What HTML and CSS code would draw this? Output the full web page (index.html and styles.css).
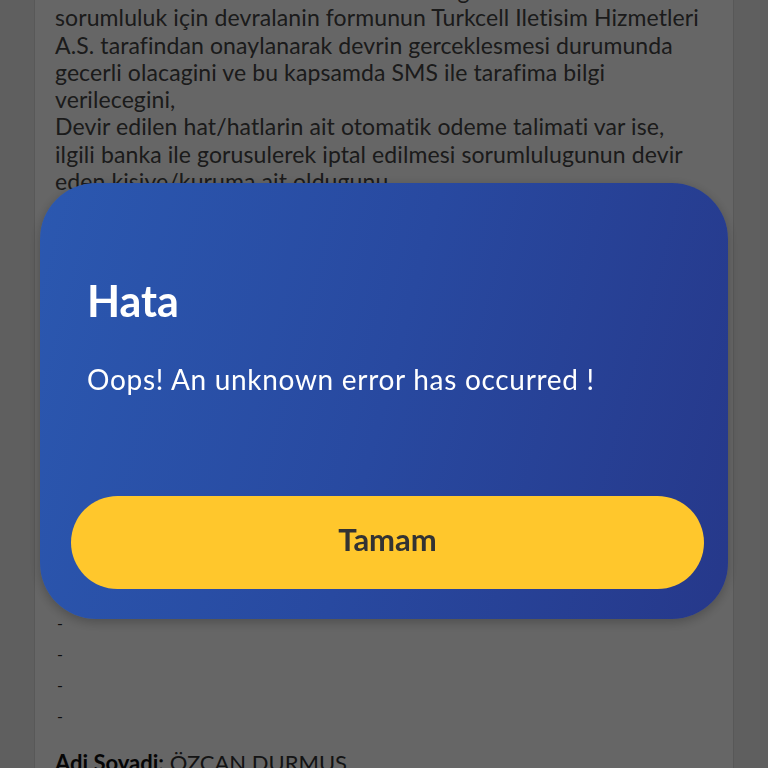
FILE: index.html
```html
<!DOCTYPE html>
<html lang="tr">
<head>
<meta charset="utf-8">
<title>Hata</title>
<link rel="stylesheet" href="styles.css">
</head>
<body>
<main class="card">
  <div class="content">
    <p class="para">
      Devreden ve devralan taraflarin tum belge ile birlikte tarafimca<br>
      sorumluluk için devralanin formunun Turkcell Iletisim Hizmetleri<br>
      A.S. tarafindan onaylanarak devrin gerceklesmesi durumunda<br>
      gecerli olacagini ve bu kapsamda SMS ile tarafima bilgi<br>
      verilecegini,<br>
      Devir edilen hat/hatlarin ait otomatik odeme talimati var ise,<br>
      ilgili banka ile gorusulerek iptal edilmesi sorumlulugunun devir<br>
      eden kisiye/kuruma ait oldugunu<br>
      kabul, beyan ve taahhut ederim.<br>
      Devir tarihine kadar olusan tum borclarin<br>
      odenmesinden devreden, devir tarihinden sonra<br>
      olusacak borclardan ise devralan sorumludur.<br>
      Devir islemi tamamlandiktan sonra hat uzerindeki<br>
      kampanya ve ek paketler devralan adina<br>
      tanimlanacaktir. Devralan, hattin kullanimindan<br>
      dogacak her turlu hukuki sorumlulugu kabul eder.<br>
      Bu form iki nusha olarak duzenlenmis olup<br>
      taraflarca okunarak imza altina alinmistir.<br>
      Devreden Bilgileri<br>
      Hat Numarasi<br>
      Abone Numarasi<br>
      Kimlik Numarasi
    </p>
    <ul class="dashes">
      <li>-</li>
      <li>-</li>
      <li>-</li>
      <li>-</li>
    </ul>
    <p class="field"><strong>Adi Soyadi:</strong> ÖZCAN DURMUS</p>
  </div>
</main>

<div class="overlay">
  <section class="modal" role="alertdialog" aria-labelledby="modal-title">
    <h1 class="modal-title" id="modal-title">Hata</h1>
    <p class="modal-text">Oops! An unknown error has occurred !</p>
    <button class="modal-button" type="button">Tamam</button>
  </section>
</div>
</body>
</html>
```
FILE: styles.css
```css
html, body {
  margin: 0;
  padding: 0;
  height: 100%;
  overflow: hidden;
}

body {
  background: #eeeeee;
  font-family: Lato, "Noto Sans", sans-serif;
  padding: 0 34px;
  box-sizing: border-box;
}

.card {
  background: #ffffff;
  border-left: 1px solid #dcdcdc;
  border-right: 1px solid #dcdcdc;
  min-height: 100%;
  padding: 0 20px;
}

.content {
  margin-top: -23px;
}

.para {
  margin: 0;
  font-size: 23px;
  letter-spacing: 0.1px;
  line-height: 27.3px;
  color: #444;
  white-space: nowrap;
}

.dashes {
  list-style: none;
  margin: 29px 0 0;
  padding: 0 0 0 2px;
  font-size: 16px;
  line-height: 31px;
  color: #222;
}

.field {
  margin: 18px 0 0;
  font-size: 22px;
  line-height: 27.3px;
  color: #333;
}

.field strong {
  color: #111;
  font-weight: 700;
}

.overlay {
  position: fixed;
  inset: 0;
  background: rgba(0, 0, 0, 0.6);
  display: flex;
  align-items: center;
  justify-content: center;
  padding-top: 34px;
  box-sizing: border-box;
}

.modal {
  width: 688px;
  height: 436px;
  box-sizing: border-box;
  border-radius: 56px;
  background: linear-gradient(105deg, #2b58b0 0%, #2849a0 50%, #26388a 100%);
  box-shadow: 0 3px 12px rgba(0, 0, 0, 0.25);
  padding: 94px 24px 30px 31px;
  display: flex;
  flex-direction: column;
}

.modal-title {
  margin: 0 0 0 16px;
  font-size: 43px;
  line-height: 48px;
  font-weight: 700;
  color: #ffffff;
}

.modal-text {
  margin: 38px 0 0 16px;
  font-size: 28px;
  letter-spacing: 0.7px;
  line-height: 32px;
  color: #ffffff;
}

.modal-button {
  margin-top: auto;
  height: 93px;
  width: 100%;
  padding: 0 0 8px;
  border: none;
  border-radius: 47px;
  background: #ffc72c;
  font-family: Lato, "Noto Sans", sans-serif;
  font-size: 31px;
  font-weight: 700;
  color: #333333;
  cursor: pointer;
}
```
